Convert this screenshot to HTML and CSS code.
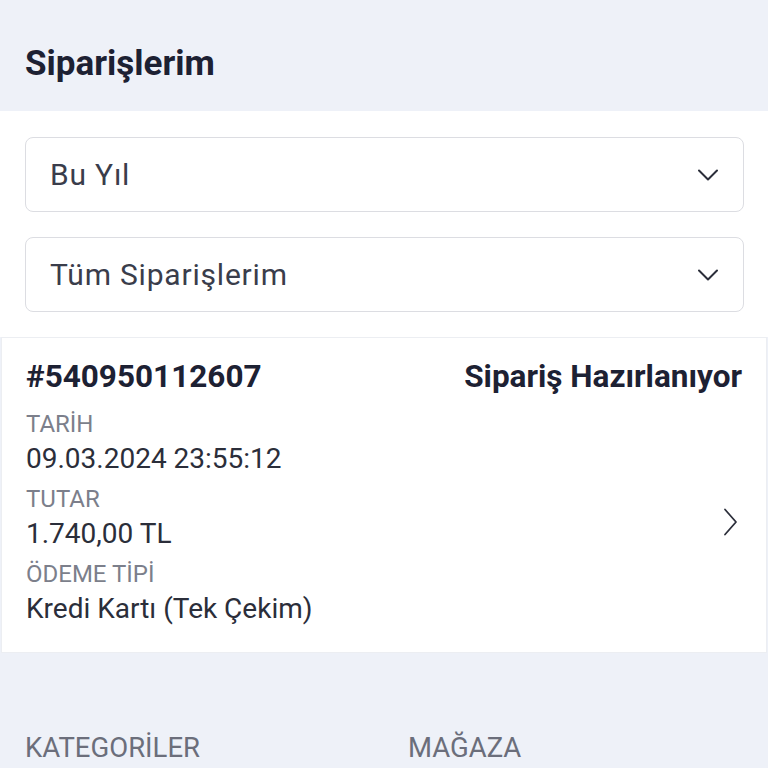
FILE: index.html
```html
<!DOCTYPE html>
<html lang="tr">
<head>
<meta charset="utf-8">
<link rel="stylesheet" href="styles.css">
</head>
<body>
<header class="top">
  <h1 class="title">Siparişlerim</h1>
</header>
<section class="filters">
  <div class="select">
    <span class="select-text">Bu Yıl</span>
    <svg class="chev" width="20" height="12" viewBox="0 0 20 12"><path d="M1 1.5 L10 10.5 L19 1.5" fill="none" stroke="#2b2e3a" stroke-width="2" stroke-linecap="round" stroke-linejoin="round"/></svg>
  </div>
  <div class="select">
    <span class="select-text">Tüm Siparişlerim</span>
    <svg class="chev" width="20" height="12" viewBox="0 0 20 12"><path d="M1 1.5 L10 10.5 L19 1.5" fill="none" stroke="#2b2e3a" stroke-width="2" stroke-linecap="round" stroke-linejoin="round"/></svg>
  </div>
</section>
<section class="card">
  <div class="card-head">
    <span class="order-no">#540950112607</span>
    <span class="status">Sipariş Hazırlanıyor</span>
  </div>
  <div class="card-body">
    <div class="fields">
      <div class="label">TARİH</div>
      <div class="value">09.03.2024 23:55:12</div>
      <div class="label">TUTAR</div>
      <div class="value">1.740,00 TL</div>
      <div class="label">ÖDEME TİPİ</div>
      <div class="value">Kredi Kartı (Tek Çekim)</div>
    </div>
    <svg class="arrow" width="16" height="28" viewBox="0 0 16 28"><path d="M2 1.5 L13 14 L2 26.5" fill="none" stroke="#2b2e3a" stroke-width="1.8" stroke-linecap="round" stroke-linejoin="round"/></svg>
  </div>
</section>
<footer class="foot">
  <div class="foot-col">KATEGORİLER</div>
  <div class="foot-col">MAĞAZA</div>
</footer>
</body>
</html>
```
FILE: styles.css
```css
html, body {
  margin: 0;
  padding: 0;
}
body {
  font-family: Roboto, "Noto Sans", sans-serif;
  background: #eef1f8;
  color: #1d2133;
  width: 768px;
}
.top {
  background: #eef1f8;
  height: 111px;
  display: flex;
  align-items: center;
  padding: 16px 25px 0 25px;
  box-sizing: border-box;
}
.title {
  margin: 0;
  font-size: 35px;
  font-weight: 700;
  color: #1d2133;
  line-height: 40px;
}
.filters {
  background: #fff;
  padding: 26px 24px 25px 25px;
  display: flex;
  flex-direction: column;
  gap: 25px;
}
.select {
  height: 75px;
  box-sizing: border-box;
  border: 1px solid #dcdde2;
  border-radius: 8px;
  display: flex;
  align-items: center;
  justify-content: space-between;
  padding: 0 25px 0 24px;
}
.select-text {
  font-size: 30px;
  letter-spacing: 0.8px;
  color: #3a3d4b;
}
.card {
  background: #fff;
  margin: 0 1px;
  border: 1px solid #eceef2;
  padding: 19px 24px 0 24px;
  height: 316px;
  box-sizing: border-box;
}
.card-head {
  display: flex;
  justify-content: space-between;
  align-items: baseline;
  line-height: 40px;
}
.order-no {
  font-size: 31.5px;
  font-weight: 700;
  color: #1d2133;
}
.status {
  font-size: 31.5px;
  font-weight: 700;
  color: #1d2133;
}
.card-body {
  display: flex;
  justify-content: space-between;
  align-items: center;
  margin-top: 10px;
}
.fields {
  display: flex;
  flex-direction: column;
}
.label {
  font-size: 24px;
  color: #7c7f8b;
  line-height: 34px;
}
.value {
  font-size: 28px;
  color: #2b2e3a;
  line-height: 36px;
  margin-bottom: 5px;
}
.value:last-child {
  margin-bottom: 0;
}
.arrow {
  margin-right: 3px;
  margin-top: 10px;
}
.foot {
  display: grid;
  grid-template-columns: 383px 1fr;
  padding: 78px 25px 0 25px;
}
.foot-col {
  font-size: 27.5px;
  color: #6b6e7b;
}
```
